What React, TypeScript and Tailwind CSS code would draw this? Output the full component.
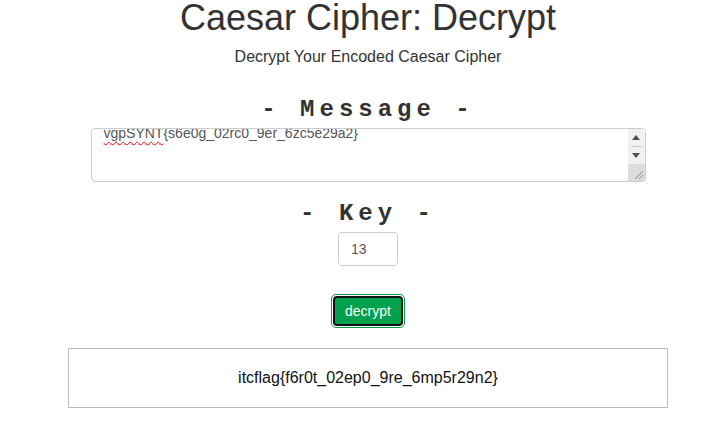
export default function App() {
  return (
    <div className="min-h-[426px] w-[714px] bg-white pl-[22px] font-['Liberation_Sans',Arial,sans-serif] text-[#333]">
      <div className="flex flex-col items-center">
        <h1 className="mt-[-2px] text-[36px] leading-[40px]">Caesar Cipher: Decrypt</h1>
        <p className="mt-[9px] text-[16px] leading-[20px]">Decrypt Your Encoded Caesar Cipher</p>

        <h2 className="mt-[30px] font-['Liberation_Mono','Courier_New',monospace] text-[24px] font-bold leading-[26px] tracking-[5px]">
          - Message -
        </h2>

        {/* textarea scrolled a little, so the first line is cut at the top */}
        <div className="mt-[5px] flex h-[54px] w-[555px] overflow-hidden rounded-[4px] border border-[#ccc] bg-white">
          <div className="flex-1 overflow-hidden pl-[12px]">
            <div className="mt-[-6px] text-[14px] leading-[20px] text-[#555]">
              <span className="underline decoration-[#e00] decoration-wavy decoration-1 underline-offset-[3px]">vgpSYNT</span>
              {"{s6e0g_02rc0_9er_6zc5e29a2}"}
            </div>
          </div>
          <div className="flex w-[17px] flex-col bg-[#f1f1f1]">
            <div className="flex h-[17px] items-center justify-center">
              <svg width="8" height="5" viewBox="0 0 8 5">
                <path d="M0 5 L4 0 L8 5 Z" fill="#505050" />
              </svg>
            </div>
            <div className="mx-[3px] h-px bg-[#c8c8c8]" />
            <div className="flex h-[17px] items-center justify-center">
              <svg width="8" height="5" viewBox="0 0 8 5">
                <path d="M0 0 L4 5 L8 0 Z" fill="#505050" />
              </svg>
            </div>
            <div className="flex flex-1 items-end justify-end bg-[#dcdcdc] pb-[2px] pr-[2px]">
              <svg width="9" height="9" viewBox="0 0 9 9">
                <path d="M1 9 L9 1 M5 9 L9 5" stroke="#888" strokeWidth="1" />
              </svg>
            </div>
          </div>
        </div>

        <h2 className="mt-[19px] font-['Liberation_Mono','Courier_New',monospace] text-[24px] font-bold leading-[26px] tracking-[5px]">
          - Key -
        </h2>

        <div className="mt-[5px] flex h-[34px] w-[60px] items-center rounded-[4px] border border-[#ccc] pl-[12px] text-[14px] text-[#555]">
          13
        </div>

        <button
          type="button"
          className="mt-[28px] rounded-[5px] border border-[#0a9a4a] bg-white p-px"
        >
          <span className="block rounded-[4px] border-2 border-[#111] bg-[#00a04c] px-[10px] py-[4px] text-[14px] leading-[18px] text-white">
            decrypt
          </span>
        </button>

        <div className="mt-[20px] flex h-[60px] w-[600px] items-center justify-center border border-[#bbb] text-[16px] text-[#111]">
          itcflag{"{f6r0t_02ep0_9re_6mp5r29n2}"}
        </div>
      </div>
    </div>
  );
}
